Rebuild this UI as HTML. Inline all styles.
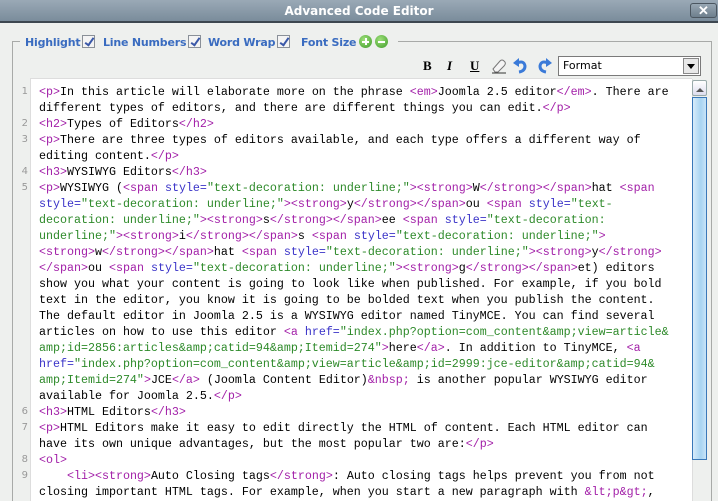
<!DOCTYPE html>
<html><head><meta charset="utf-8"><style>
*{margin:0;padding:0;box-sizing:border-box}
html,body{width:718px;height:501px;overflow:hidden}
body{background:#eef0ee;font-family:"Liberation Sans",sans-serif;position:relative}
#title{position:absolute;left:0;top:0;width:718px;height:23px;background:linear-gradient(#9aa9b6,#7a8c9b);border-bottom:2px solid #3d4750;color:#fff;font-weight:bold;font-size:12px;text-align:center;line-height:22px;font-family:"DejaVu Sans",sans-serif}
#close{position:absolute;left:690px;top:3px;width:27px;height:15px;border:1px solid #4b5660;border-radius:3px;background:linear-gradient(#98a7b3,#6e7f8d);color:#fff;font-size:13px;line-height:13px;text-align:center;font-weight:bold}
#fs{position:absolute;left:12px;top:41px;width:700px;height:470px;border:1px solid #a8aaa8;border-bottom:none}
#leg{position:absolute;left:20px;top:34px;width:378px;height:16px;background:#eef0ee}
.lbl{position:absolute;top:35px;font-size:11px;font-weight:bold;color:#3a6cc0;line-height:14px;font-family:"DejaVu Sans",sans-serif;white-space:nowrap;letter-spacing:-0.2px}
.cb{display:inline-block;width:13px;height:13px;border:1px solid #8a9098;background:#f4f4f4;vertical-align:-2px;margin-left:2px;position:relative}
.cb:after{content:"";position:absolute;left:4px;top:0px;width:3px;height:8px;border:solid #3a58a8;border-width:0 2px 2px 0;transform:rotate(35deg)}
.pm{display:inline-block;width:13px;height:13px;border-radius:50%;background:radial-gradient(circle at 40% 35%,#9ee07a,#3f9b2a);vertical-align:-2px;margin-left:3px;position:relative}
.pm i{position:absolute;background:#fff}
.tb{position:absolute;top:58px;font-family:"Liberation Serif",serif;font-weight:bold;font-size:13px}
#fmt{position:absolute;left:558px;top:56px;width:143px;height:20px;border:1px solid #7a7a7a;background:#fff;font-size:11px;line-height:18px;padding-left:4px;font-family:"DejaVu Sans",sans-serif}
#fmt b{position:absolute;right:1px;top:1px;width:16px;height:16px;border:1px solid #888;background:#e8e8e8}
#fmt b:after{content:"";position:absolute;left:3px;top:5px;border:4px solid transparent;border-top:5px solid #000}
#gut{position:absolute;left:13px;top:78px;width:17px;height:430px;background:#eef0ee}
#ed{position:absolute;left:30px;top:78px;width:662px;height:430px;background:#fff;border-top:1px solid #ddd;border-left:1px solid #ddd}
#code{position:absolute;left:39px;top:84px;font-family:"Liberation Mono",monospace;font-size:11.67px;color:#000}
#code div{height:16px;line-height:16px;white-space:pre}
#nums{position:absolute;left:13px;top:84px;width:15px;font-family:"DejaVu Sans",sans-serif;font-size:10px;color:#999;text-align:right}
#nums div{height:16px;line-height:16px}
t{color:#a21fa8}k{color:#3a33c8}v{color:#2e8a2a}
#sb{position:absolute;left:692px;top:79px;width:16px;height:430px;background:#eef0ee;border-left:1px solid #ddd}
#up{position:absolute;left:692px;top:80px;width:15px;height:16px;border:1px solid #9aa;border-radius:2px;background:linear-gradient(#fff,#dde)}
#up:after{content:"";position:absolute;left:3px;top:3px;border:4px solid transparent;border-bottom:4px solid #555}
#th{position:absolute;left:692px;top:97px;width:15px;height:363px;border:1px solid #3a78b8;background:linear-gradient(90deg,#d8ecfa,#a8d4f2 60%,#c8e4f8)}
</style></head><body>
<div id="title">Advanced Code Editor</div><div id="close">✕</div>
<div id="fs"></div><div id="leg"></div>
<span class="lbl" style="left:25px">Highlight<span class="cb"></span></span>
<span class="lbl" style="left:103px">Line Numbers<span class="cb"></span></span>
<span class="lbl" style="left:208px">Word Wrap<span class="cb"></span></span>
<span class="lbl" style="left:301px">Font Size<span class="pm"><i style="left:3px;top:5.5px;width:7px;height:2px"></i><i style="left:5.5px;top:3px;width:2px;height:7px"></i></span><span class="pm"><i style="left:3px;top:5.5px;width:7px;height:2px"></i></span></span>
<div class="tb" style="left:423px">B</div>
<div class="tb" style="left:447px;font-style:italic">I</div>
<div class="tb" style="left:470px;text-decoration:underline">U</div>
<svg style="position:absolute;left:490px;top:57px" width="18" height="18"><path d="M3 12 L10 4 Q12 2 14 4 L15 5 Q16 7 14 9 L8 15 L5 15 Z" fill="#f4f4f4" stroke="#777"/><path d="M2 16 H16" stroke="#333"/></svg>
<svg style="position:absolute;left:512px;top:57px" width="16" height="18"><path d="M5 6 Q12 3 13 9 Q13 14 7 15" fill="none" stroke="#3a7ad8" stroke-width="3"/><path d="M1 6 L7 1 L7 10 Z" fill="#3a7ad8"/></svg>
<svg style="position:absolute;left:537px;top:57px" width="16" height="18"><path d="M11 6 Q4 3 3 9 Q3 14 9 15" fill="none" stroke="#3a7ad8" stroke-width="3"/><path d="M15 6 L9 1 L9 10 Z" fill="#3a7ad8"/></svg>
<div id="fmt">Format<b></b></div>
<div id="gut"></div><div id="ed"></div>
<div id="nums"><div>1</div><div></div><div>2</div><div>3</div><div></div><div>4</div><div>5</div><div></div><div></div><div></div><div></div><div></div><div></div><div></div><div></div><div></div><div></div><div></div><div></div><div></div><div>6</div><div>7</div><div></div><div>8</div><div>9</div></div>
<div id="code"><div><t>&lt;p&gt;</t>In this article will elaborate more on the phrase <t>&lt;em&gt;</t>Joomla 2.5 editor<t>&lt;/em&gt;</t>. There are</div><div>different types of editors, and there are different things you can edit.<t>&lt;/p&gt;</t></div><div><t>&lt;h2&gt;</t>Types of Editors<t>&lt;/h2&gt;</t></div><div><t>&lt;p&gt;</t>There are three types of editors available, and each type offers a different way of</div><div>editing content.<t>&lt;/p&gt;</t></div><div><t>&lt;h3&gt;</t>WYSIWYG Editors<t>&lt;/h3&gt;</t></div><div><t>&lt;p&gt;</t>WYSIWYG (<t>&lt;span </t><k>style=</k><v>"text-decoration: underline;"</v><t>&gt;&lt;strong&gt;</t>W<t>&lt;/strong&gt;&lt;/span&gt;</t>hat <t>&lt;span</t></div><div><k>style=</k><v>"text-decoration: underline;"</v><t>&gt;&lt;strong&gt;</t>y<t>&lt;/strong&gt;&lt;/span&gt;</t>ou <t>&lt;span </t><k>style=</k><v>"text-</v></div><div><v>decoration: underline;"</v><t>&gt;&lt;strong&gt;</t>s<t>&lt;/strong&gt;&lt;/span&gt;</t>ee <t>&lt;span </t><k>style=</k><v>"text-decoration:</v></div><div><v>underline;"</v><t>&gt;&lt;strong&gt;</t>i<t>&lt;/strong&gt;&lt;/span&gt;</t>s <t>&lt;span </t><k>style=</k><v>"text-decoration: underline;"</v><t>&gt;</t></div><div><t>&lt;strong&gt;</t>w<t>&lt;/strong&gt;&lt;/span&gt;</t>hat <t>&lt;span </t><k>style=</k><v>"text-decoration: underline;"</v><t>&gt;&lt;strong&gt;</t>y<t>&lt;/strong&gt;</t></div><div><t>&lt;/span&gt;</t>ou <t>&lt;span </t><k>style=</k><v>"text-decoration: underline;"</v><t>&gt;&lt;strong&gt;</t>g<t>&lt;/strong&gt;&lt;/span&gt;</t>et) editors</div><div>show you what your content is going to look like when published. For example, if you bold</div><div>text in the editor, you know it is going to be bolded text when you publish the content.</div><div>The default editor in Joomla 2.5 is a WYSIWYG editor named TinyMCE. You can find several</div><div>articles on how to use this editor <t>&lt;a </t><k>href=</k><v>"index.php?option=com_content&amp;amp;view=article&amp;</v></div><div><v>amp;id=2856:articles&amp;amp;catid=94&amp;amp;Itemid=274"</v><t>&gt;</t>here<t>&lt;/a&gt;</t>. In addition to TinyMCE, <t>&lt;a</t></div><div><k>href=</k><v>"index.php?option=com_content&amp;amp;view=article&amp;amp;id=2999:jce-editor&amp;amp;catid=94&amp;</v></div><div><v>amp;Itemid=274"</v><t>&gt;</t>JCE<t>&lt;/a&gt;</t> (Joomla Content Editor)<t>&amp;nbsp;</t> is another popular WYSIWYG editor</div><div>available for Joomla 2.5.<t>&lt;/p&gt;</t></div><div><t>&lt;h3&gt;</t>HTML Editors<t>&lt;/h3&gt;</t></div><div><t>&lt;p&gt;</t>HTML Editors make it easy to edit directly the HTML of content. Each HTML editor can</div><div>have its own unique advantages, but the most popular two are:<t>&lt;/p&gt;</t></div><div><t>&lt;ol&gt;</t></div><div>    <t>&lt;li&gt;&lt;strong&gt;</t>Auto Closing tags<t>&lt;/strong&gt;</t>: Auto closing tags helps prevent you from not</div><div>closing important HTML tags. For example, when you start a new paragraph with <t>&amp;lt;p&amp;gt;</t>,</div></div>
<div id="sb"></div><div id="up"></div><div id="th"></div>
</body></html>
